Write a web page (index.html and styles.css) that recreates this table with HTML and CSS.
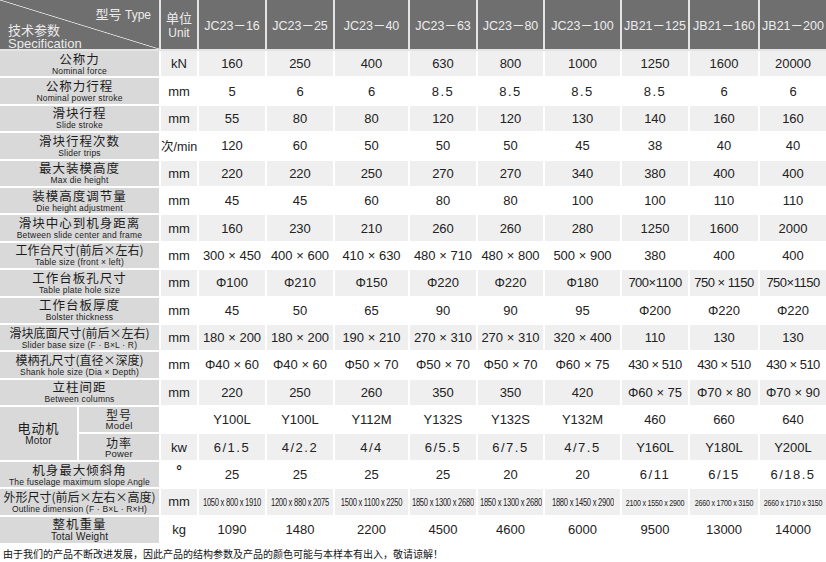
FILE: index.html
```html
<!DOCTYPE html>
<html lang="zh">
<head>
<meta charset="utf-8">
<title>技术参数</title>
<link rel="stylesheet" href="styles.css">
</head>
<body>
<table class="spec">
  <colgroup>
    <col class="c-a"><col class="c-b"><col class="c-unit">
    <col class="c68"><col class="c68"><col class="c75"><col class="c68"><col class="c67"><col class="c77"><col class="c68"><col class="c70"><col class="c67">
  </colgroup>
  <thead>
    <tr class="head">
      <th class="corner" colspan="2">
        <div class="corner-in">
          <div class="type"><span class="zh">型号</span> <span class="en">Type</span></div>
          <div class="tech"><div class="zh">技术参数</div><div class="en">Specification</div></div>
        </div>
      </th>
      <th class="unit-h"><div class="zh">单位</div><div class="en">Unit</div></th>
      <th>JC23－16</th><th>JC23－25</th><th>JC23－40</th><th>JC23－63</th><th>JC23－80</th><th>JC23－100</th><th>JB21－125</th><th>JB21－160</th><th>JB21－200</th>
    </tr>
  </thead>
  <tbody>
    <tr class="odd"><th class="label" colspan="2"><div class="zh">公称力</div><div class="en">Nominal force</div></th><td class="unit">kN</td><td>160</td><td>250</td><td>400</td><td>630</td><td>800</td><td>1000</td><td>1250</td><td>1600</td><td>20000</td></tr>
    <tr><th class="label" colspan="2"><div class="zh">公称力行程</div><div class="en">Nominal power stroke</div></th><td class="unit">mm</td><td>5</td><td>6</td><td>6</td><td class="sp">8.5</td><td class="sp">8.5</td><td class="sp">8.5</td><td class="sp">8.5</td><td>6</td><td>6</td></tr>
    <tr class="odd"><th class="label" colspan="2"><div class="zh">滑块行程</div><div class="en">Slide stroke</div></th><td class="unit">mm</td><td>55</td><td>80</td><td>80</td><td>120</td><td>120</td><td>130</td><td>140</td><td>160</td><td>160</td></tr>
    <tr><th class="label" colspan="2"><div class="zh">滑块行程次数</div><div class="en">Slider trips</div></th><td class="unit unit-wide">次/min</td><td>120</td><td>60</td><td>50</td><td>50</td><td>50</td><td>45</td><td>38</td><td>40</td><td>40</td></tr>
    <tr class="odd"><th class="label" colspan="2"><div class="zh">最大装模高度</div><div class="en">Max die height</div></th><td class="unit">mm</td><td>220</td><td>220</td><td>250</td><td>270</td><td>270</td><td>340</td><td>380</td><td>400</td><td>400</td></tr>
    <tr><th class="label" colspan="2"><div class="zh">装模高度调节量</div><div class="en">Die height adjustment</div></th><td class="unit">mm</td><td>45</td><td>45</td><td>60</td><td>80</td><td>80</td><td>100</td><td>100</td><td>110</td><td>110</td></tr>
    <tr class="odd"><th class="label" colspan="2"><div class="zh">滑块中心到机身距离</div><div class="en">Between slide center and frame</div></th><td class="unit">mm</td><td>160</td><td>230</td><td>210</td><td>260</td><td>260</td><td>280</td><td>1250</td><td>1600</td><td>2000</td></tr>
    <tr><th class="label" colspan="2"><div class="zh long">工作台尺寸(前后×左右)</div><div class="en">Table size (front × left)</div></th><td class="unit">mm</td><td>300 × 450</td><td>400 × 600</td><td>410 × 630</td><td>480 × 710</td><td>480 × 800</td><td>500 × 900</td><td>380</td><td>400</td><td>400</td></tr>
    <tr class="odd"><th class="label" colspan="2"><div class="zh">工作台板孔尺寸</div><div class="en">Table plate hole size</div></th><td class="unit">mm</td><td>Φ100</td><td>Φ210</td><td>Φ150</td><td>Φ220</td><td>Φ220</td><td>Φ180</td><td class="tight">700×1100</td><td class="tight">750 × 1150</td><td class="tight">750×1150</td></tr>
    <tr><th class="label" colspan="2"><div class="zh">工作台板厚度</div><div class="en">Bolster thickness</div></th><td class="unit">mm</td><td>45</td><td>50</td><td>65</td><td>90</td><td>90</td><td>95</td><td>Φ200</td><td>Φ220</td><td>Φ220</td></tr>
    <tr class="odd"><th class="label" colspan="2"><div class="zh long">滑块底面尺寸(前后×左右)</div><div class="en">Slider base size (F · B×L · R)</div></th><td class="unit">mm</td><td>180 × 200</td><td>180 × 200</td><td>190 × 210</td><td>270 × 310</td><td>270 × 310</td><td>320 × 400</td><td>110</td><td>130</td><td>130</td></tr>
    <tr><th class="label" colspan="2"><div class="zh long">模柄孔尺寸(直径×深度)</div><div class="en">Shank hole size (Dia × Depth)</div></th><td class="unit">mm</td><td>Φ40 × 60</td><td>Φ40 × 60</td><td>Φ50 × 70</td><td>Φ50 × 70</td><td>Φ50 × 70</td><td>Φ60 × 75</td><td class="tight">430 × 510</td><td class="tight">430 × 510</td><td class="tight">430 × 510</td></tr>
    <tr class="odd"><th class="label" colspan="2"><div class="zh">立柱间距</div><div class="en">Between columns</div></th><td class="unit">mm</td><td>220</td><td>250</td><td>260</td><td>350</td><td>350</td><td>420</td><td>Φ60 × 75</td><td>Φ70 × 80</td><td>Φ70 × 90</td></tr>
    <tr><th class="label motor" rowspan="2"><div class="zh">电动机</div><div class="en en-big">Motor</div></th><th class="label sub"><div class="zh">型号</div><div class="en en-big">Model</div></th><td class="unit"></td><td>Y100L</td><td>Y100L</td><td>Y112M</td><td>Y132S</td><td>Y132S</td><td>Y132M</td><td>460</td><td>660</td><td>640</td></tr>
    <tr class="odd"><th class="label sub"><div class="zh">功率</div><div class="en en-big">Power</div></th><td class="unit">kw</td><td class="sp">6/1.5</td><td class="sp">4/2.2</td><td class="sp">4/4</td><td class="sp">6/5.5</td><td class="sp">6/7.5</td><td class="sp">4/7.5</td><td>Y160L</td><td>Y180L</td><td>Y200L</td></tr>
    <tr><th class="label" colspan="2"><div class="zh">机身最大倾斜角</div><div class="en">The fuselage maximum slope Angle</div></th><td class="unit deg">°</td><td>25</td><td>25</td><td>25</td><td>25</td><td>20</td><td>20</td><td class="sp">6/11</td><td class="sp">6/15</td><td class="sp">6/18.5</td></tr>
    <tr class="odd"><th class="label" colspan="2"><div class="zh long">外形尺寸(前后×左右×高度)</div><div class="en">Outline dimension (F · B×L · R×H)</div></th><td class="unit">mm</td><td><span class="xs">1050 x 800 x 1910</span></td><td><span class="xs">1200 x 880 x 2075</span></td><td><span class="xs">1500 x 1100 x 2250</span></td><td><span class="xs">1850 x 1300 x 2680</span></td><td><span class="xs">1850 x 1300 x 2680</span></td><td><span class="xs">1880 x 1450 x 2900</span></td><td><span class="xxs">2100 x 1550 x 2900</span></td><td><span class="xxs">2660 x 1700 x 3150</span></td><td><span class="xxs">2660 x 1710 x 3150</span></td></tr>
    <tr><th class="label" colspan="2"><div class="zh">整机重量</div><div class="en en-big">Total Weight</div></th><td class="unit">kg</td><td>1090</td><td>1480</td><td>2200</td><td>4500</td><td>4600</td><td>6000</td><td>9500</td><td>13000</td><td>14000</td></tr>
  </tbody>
</table>
<p class="note">由于我们的产品不断改进发展，因此产品的结构参数及产品的颜色可能与本样本有出入，敬请谅解！</p>
</body>
</html>
```
FILE: styles.css
```css
html, body {
  margin: 0;
  padding: 0;
  background: #ffffff;
}
body {
  width: 826px;
  font-family: "Liberation Sans", "Noto Sans CJK SC", sans-serif;
  color: #1f1f1f;
}
.spec {
  width: 826px;
  table-layout: fixed;
  border-collapse: collapse;
}
.c-a { width: 78px; }
.c-b { width: 82px; }
.c-unit { width: 38px; }
.c68 { width: 68px; }
.c75 { width: 75px; }
.c67 { width: 67px; }
.c77 { width: 77px; }
.c70 { width: 70px; }

.spec th, .spec td {
  border: 2px solid #ffffff;
  padding: 0;
  text-align: center;
  vertical-align: middle;
  overflow: hidden;
  white-space: nowrap;
}
.spec tr.head { height: 50px; }
.spec tr.head th {
  background: #6f6f6f;
  color: #ececec;
  font-weight: normal;
  font-size: 12.5px;
  font-family: "Liberation Sans", "Noto Sans CJK SC", sans-serif;
  border-color: #e4e4e4;
  border-top: 0;
}
.spec tr.head th:first-child { border-left: 0; }
.spec tr.head th:last-child { border-right: 0; }

.corner {
  background: #6f6f6f linear-gradient(to top right, transparent calc(50% - 0.8px), #e6e6e6 50%, transparent calc(50% + 0.8px)) !important;
  text-align: left !important;
}
.corner-in {
  display: flex;
  flex-direction: column;
  height: 48px;
  padding: 5px 8px 1px 8px;
  box-sizing: border-box;
}
.corner-in .type {
  text-align: right;
  line-height: 15px;
}
.corner-in .type .zh {
  font-family: "Noto Sans CJK SC", sans-serif;
  font-size: 13px;
}
.corner-in .type .en { font-size: 12px; }
.corner-in .tech .zh {
  font-family: "Noto Sans CJK SC", sans-serif;
  font-size: 13px;
  line-height: 14px;
}
.corner-in .tech .en {
  font-size: 13px;
  line-height: 13px;
}
.unit-h .zh {
  font-family: "Noto Sans CJK SC", sans-serif;
  font-size: 13px;
  line-height: 16px;
}
.unit-h .en {
  font-size: 12px;
  line-height: 14px;
}

.spec tbody tr { height: 27.4px; }
.spec tbody tr:last-child th,
.spec tbody tr:last-child td { border-bottom: 0; }
.spec tbody td {
  font-family: "Liberation Sans", sans-serif;
  font-size: 13px;
  color: #222222;
  background: #ffffff;
}
.spec tbody tr.odd td { background: #efefef; }
.spec tbody tr > th:first-child { border-left: 0; }
.spec tbody td:last-child { border-right: 0; }

.label {
  background: #d9d9d9;
  font-weight: normal;
  color: #1c1c1c;
}
.label .zh {
  font-family: "Noto Sans CJK SC", sans-serif;
  font-size: 12.5px;
  line-height: 14px;
  letter-spacing: 1px;
}
.label .zh.long {
  letter-spacing: 0;
  font-size: 12px;
}
.label .en {
  font-family: "Liberation Sans", sans-serif;
  font-size: 8.5px;
  line-height: 10px;
  letter-spacing: 0.2px;
}
.label .en-big {
  font-size: 10px;
  line-height: 11px;
}
.motor .zh {
  font-size: 13px;
  line-height: 15px;
}
.motor .en { line-height: 12px; }
.sub .zh {
  font-size: 12px;
  line-height: 13px;
}
.sub .en-big {
  font-size: 9.5px;
  line-height: 10px;
}

.spec tbody td.unit-wide {
  font-family: "Liberation Sans", "Noto Sans CJK SC", sans-serif;
  font-size: 12.5px;
  text-align: left;
}
.spec tbody td.deg {
  vertical-align: top;
  font-size: 14px;
  line-height: 18px;
  font-weight: bold;
}
.spec tbody td.sp { letter-spacing: 1.5px; }
.spec tbody td.tight { letter-spacing: -0.5px; }
.xs, .xxs {
  display: inline-block;
  transform-origin: center;
}
.xs {
  font-size: 11.5px;
  letter-spacing: -0.4px;
  transform: scaleX(0.66);
  margin: 0 -20px;
}
.xxs {
  font-size: 9.5px;
  letter-spacing: -0.3px;
  transform: scaleX(0.75);
  margin: 0 -12px;
}

.note {
  margin: 4px 0 0 3px;
  font-family: "Noto Sans CJK SC", sans-serif;
  font-size: 10px;
  line-height: 14px;
  color: #111111;
}
```
